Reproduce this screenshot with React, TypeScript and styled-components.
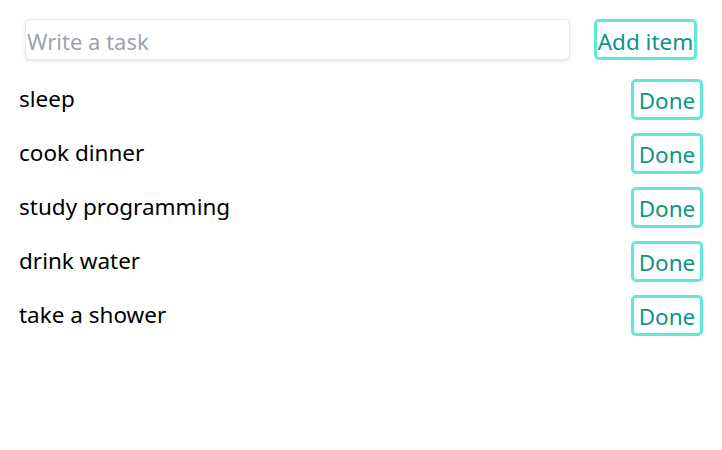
import React, { useState } from "react";
import styled, { createGlobalStyle } from "styled-components";

const Global = createGlobalStyle`
  html, body { margin: 0; padding: 0; background: #ffffff; }
  body { font-family: "Noto Sans", "Open Sans", sans-serif; }
`;

const Page = styled.div`
  width: 722px;
  height: 450px;
  box-sizing: border-box;
  padding: 19px 19px 0 19px;
  display: flex;
  flex-direction: column;
`;

const Form = styled.form`
  display: flex;
  align-items: center;
  justify-content: space-between;
  padding: 0 6px 0 6px;
  height: 41px;
  margin-bottom: 19px;
`;

const TaskInput = styled.input`
  width: 545px;
  height: 41px;
  box-sizing: border-box;
  border: 1px solid #e5e7eb;
  border-radius: 5px;
  box-shadow: 0 1px 3px rgba(0, 0, 0, 0.12);
  padding: 2px 1px 0 1px;
  font-family: inherit;
  font-size: 22px;
  color: #111;
  outline: none;
  &::placeholder { color: #9ca3af; }
`;

const OutlineButton = styled.button<{ $w: number }>`
  width: ${(p) => p.$w}px;
  height: 41px;
  box-sizing: border-box;
  border: 3px solid #5eead4;
  border-radius: 5px;
  background: #fff;
  color: #0d9488;
  font-family: inherit;
  font-size: 22.5px;
  padding: 3px 0 0 0;
  cursor: pointer;
  display: flex;
  align-items: center;
  justify-content: center;
`;

const List = styled.ul`
  list-style: none;
  margin: 0;
  padding: 0;
  display: flex;
  flex-direction: column;
  gap: 14px;
`;

const Row = styled.li`
  display: flex;
  align-items: center;
  justify-content: space-between;
  height: 40px;
`;

const TaskText = styled.span`
  font-size: 22.5px;
  color: #000;
  margin-top: -2px;
`;

const initial = ["sleep", "cook dinner", "study programming", "drink water", "take a shower"];

export default function App() {
  const [tasks, setTasks] = useState<string[]>(initial);
  const [text, setText] = useState("");
  return (
    <Page>
      <Global />
      <Form
        onSubmit={(e) => {
          e.preventDefault();
          if (text.trim()) {
            setTasks([...tasks, text.trim()]);
            setText("");
          }
        }}
      >
        <TaskInput placeholder="Write a task" value={text} onChange={(e) => setText(e.target.value)} />
        <OutlineButton $w={103} type="submit">Add item</OutlineButton>
      </Form>
      <List>
        {tasks.map((t, i) => (
          <Row key={i}>
            <TaskText>{t}</TaskText>
            <OutlineButton $w={72} onClick={() => setTasks(tasks.filter((_, j) => j !== i))}>
              Done
            </OutlineButton>
          </Row>
        ))}
      </List>
    </Page>
  );
}
